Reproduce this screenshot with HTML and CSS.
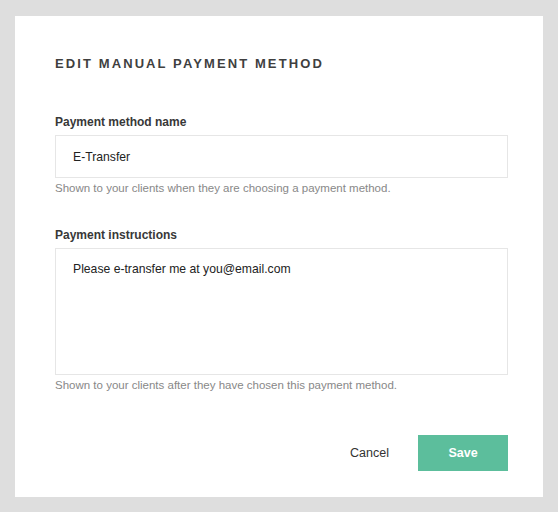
FILE: index.html
```html
<!DOCTYPE html>
<html>
<head>
<meta charset="utf-8">
<link rel="stylesheet" href="styles.css">
</head>
<body>
<div class="modal">
  <h1 class="title">EDIT MANUAL PAYMENT METHOD</h1>
  <div class="field">
    <label class="label">Payment method name</label>
    <div class="input">E-Transfer</div>
    <p class="help">Shown to your clients when they are choosing a payment method.</p>
  </div>
  <div class="field field-second">
    <label class="label">Payment instructions</label>
    <div class="input textarea">Please e-transfer me at you@email.com</div>
    <p class="help">Shown to your clients after they have chosen this payment method.</p>
  </div>
  <div class="actions">
    <button class="btn-cancel">Cancel</button>
    <button class="btn-save">Save</button>
  </div>
</div>
</body>
</html>
```
FILE: styles.css
```css
html, body {
  margin: 0;
  padding: 0;
  background: #dedede;
}
body {
  padding: 16px 15px 15px 15px;
  font-family: "Liberation Sans", Arial, sans-serif;
}
.modal {
  width: 528px;
  height: 481px;
  box-sizing: border-box;
  background: #fff;
  padding: 40px 35px 0 40px;
}
.title {
  margin: 0;
  font-size: 13px;
  font-weight: bold;
  letter-spacing: 2.1px;
  color: #3f3f3f;
  line-height: 16px;
}
.field {
  margin-top: 43px;
}
.field-second {
  margin-top: 33px;
}
.label {
  display: block;
  font-size: 12px;
  font-weight: bold;
  color: #383838;
  line-height: 14px;
  margin-bottom: 6px;
}
.input {
  height: 43px;
  box-sizing: border-box;
  border: 1px solid #e6e6e6;
  padding: 0 17px;
  display: flex;
  align-items: center;
  font-size: 12.2px;
  color: #222;
}
.textarea {
  height: 127px;
  align-items: flex-start;
  padding-top: 13px;
}
.help {
  margin: 3px 0 0;
  font-size: 11.5px;
  line-height: 14px;
  color: #888;
}
.actions {
  display: flex;
  justify-content: flex-end;
  align-items: center;
  margin-top: 43px;
  gap: 29px;
}
.btn-cancel {
  border: none;
  background: none;
  padding: 0;
  font-family: inherit;
  font-size: 12.5px;
  color: #333;
}
.btn-save {
  width: 90px;
  height: 36px;
  border: none;
  background: #5cbe9c;
  color: #fff;
  font-family: inherit;
  font-size: 12.5px;
  font-weight: bold;
}
```
